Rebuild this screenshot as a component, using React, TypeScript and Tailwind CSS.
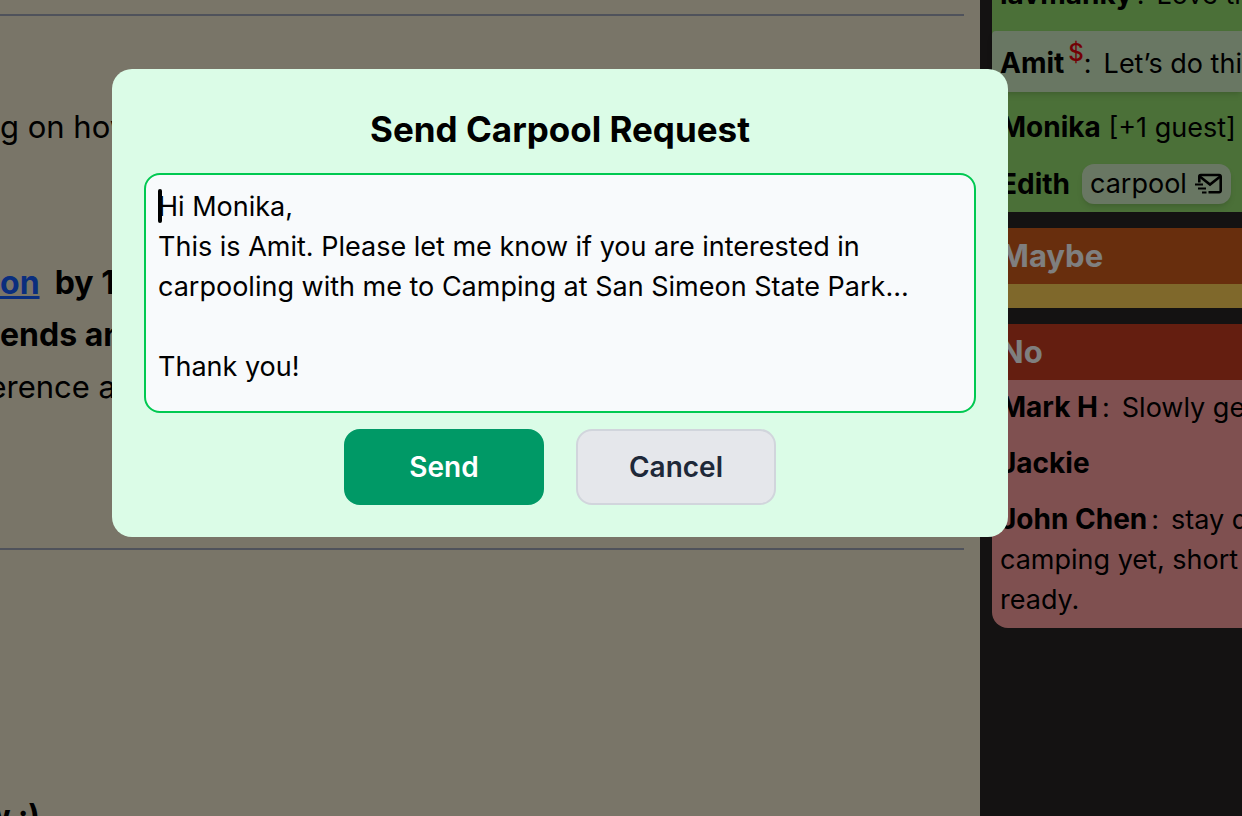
import { ComponentProps, useState } from "react";
import { twMerge } from "tailwind-merge";

const defaultMessage = `Hi Monika,
This is Amit. Please let me know if you are interested in carpooling with me to Camping at San Simeon State Park...

Thank you!`;

function MailFastIcon(props: ComponentProps<"svg">) {
  return (
    <svg
      viewBox="0 0 28 24"
      fill="none"
      stroke="currentColor"
      strokeWidth="2.6"
      aria-hidden="true"
      {...props}
    >
      <path d="M4.300 10.500V4.500a1.500 1.500 0 0 1 1.500-1.500h18.400a1.500 1.500 0 0 1 1.500 1.500v14.200a1.500 1.500 0 0 1-1.500 1.500H13.500" />
      <path d="M4.800 4.500 15 12.500 25.200 4.500" />
      <path strokeWidth="2" d="M0 12.500h8M3 16.500h8M7 20.500h4.500" />
    </svg>
  );
}

function Row({ className = "", children }: ComponentProps<"li">) {
  return <li className={twMerge("px-2 py-2 " + className)}>{children}</li>;
}

function Name({ children }: ComponentProps<"b">) {
  return <b className="text-[28px] leading-none">{children}</b>;
}

function Comment({ children }: ComponentProps<"span">) {
  return (
    <>
      :<span className="ml-3">{children}</span>
    </>
  );
}

function GroupTitle({ className = "", children }: ComponentProps<"h2">) {
  return (
    <h2
      className={twMerge(
        "mt-4 h-14 px-2 text-[31px] leading-[56px] font-bold text-white " +
          className
      )}
    >
      {children}
    </h2>
  );
}

function Description() {
  return (
    <main className="flex-1 min-w-0 overflow-hidden bg-[#f2ead0] pt-[14px] pr-4 text-[31px] leading-[52px] whitespace-nowrap">
      <hr className="border-t-2 border-[#9ea4b6]" />
      <p className="mt-[85px]">g on how</p>
      <div className="mt-[104px] text-[32px] font-bold">
        <p>
          <a href="#" className="text-blue-600 underline">
            on
          </a>
          &nbsp; by 1
        </p>
        <p>ends and</p>
      </div>
      <p className="flex w-[116px] justify-end">erence a</p>
      <hr className="mt-[135px] border-t-2 border-[#9ea4b6]" />
      <p className="mt-60 flex w-10 justify-end font-bold">w&nbsp;:)</p>
    </main>
  );
}

function Responses() {
  return (
    <aside className="w-[262px] shrink-0 overflow-hidden bg-[#282424] pl-3 whitespace-nowrap">
      <ul className="-mt-[33px] bg-[#96e070]">
        <Row>
          <Name>lavmanky</Name>
          <span className="ml-1" />
          <Comment>Love this</Comment>
        </Row>
        <Row className="my-2 rounded-l bg-[#d2eec6] pt-[13px] shadow-md">
          <Name>Amit</Name>
          <sup className="ml-1 text-2xl leading-none font-medium text-red-600">
            $
          </sup>
          <Comment>Let’s do this</Comment>
        </Row>
        <Row>
          <Name>Monika</Name> [+1 guest]
        </Row>
        <Row className="flex items-center gap-3">
          <Name>Edith</Name>
          <button className="flex h-10 items-center gap-2 rounded-xl bg-[#d2eec6] px-2 shadow-md">
            carpool
            <MailFastIcon className="h-6 w-7" />
          </button>
        </Row>
      </ul>

      <GroupTitle className="bg-[#d05c1a]">Maybe</GroupTitle>
      <div className="h-6 bg-[#ffd056]" />

      <GroupTitle className="bg-[#c83c20]">No</GroupTitle>
      <ul className="rounded-bl-2xl bg-[#ffa0a0]">
        <Row>
          <Name>Mark H</Name>
          <span className="ml-1" />
          <Comment>Slowly getting</Comment>
        </Row>
        <Row>
          <Name>Jackie</Name>
        </Row>
        <Row>
          <Name>John Chen</Name>
          <span className="ml-1" />
          <Comment>stay definitely</Comment>
          <br />
          camping yet, short
          <br />
          ready.
        </Row>
      </ul>
    </aside>
  );
}

function ModalButton({ className = "", ...props }: ComponentProps<"button">) {
  return (
    <button
      type="button"
      className={twMerge(
        "h-[76px] w-[200px] rounded-2xl border-2 text-[28px] font-semibold " +
          className
      )}
      {...props}
    />
  );
}

function CarpoolModal() {
  const [message, setMessage] = useState(defaultMessage);

  return (
    <div className="absolute inset-0 bg-black/50 pt-[69px] pl-28">
      <div
        role="dialog"
        aria-labelledby="carpool-title"
        className="w-full max-w-4xl rounded-[20px] bg-green-100 p-8"
      >
        <h1
          id="carpool-title"
          className="mb-4 text-center text-[35px] leading-[56px] font-bold"
        >
          Send Carpool Request
        </h1>
        <div className="relative">
          <textarea
            aria-labelledby="carpool-title"
            value={message}
            onChange={(e) => setMessage(e.target.value)}
            className="block h-60 w-full resize-none overflow-hidden rounded-2xl border-2 border-green-500 bg-slate-50 p-3 outline-none"
          />
          <span className="absolute top-4 left-[14px] h-[34px] w-1 rounded-sm bg-black" />
        </div>
        <div className="mt-4 flex justify-center gap-8">
          <ModalButton className="border-emerald-600 bg-emerald-600 text-white">
            Send
          </ModalButton>
          <ModalButton className="border-gray-300 bg-gray-200 text-gray-800">
            Cancel
          </ModalButton>
        </div>
      </div>
    </div>
  );
}

export default function App() {
  return (
    <div className="relative flex h-screen overflow-hidden font-['Inter',sans-serif] text-[27px] leading-10 text-black">
      <Description />
      <Responses />
      <CarpoolModal />
    </div>
  );
}
